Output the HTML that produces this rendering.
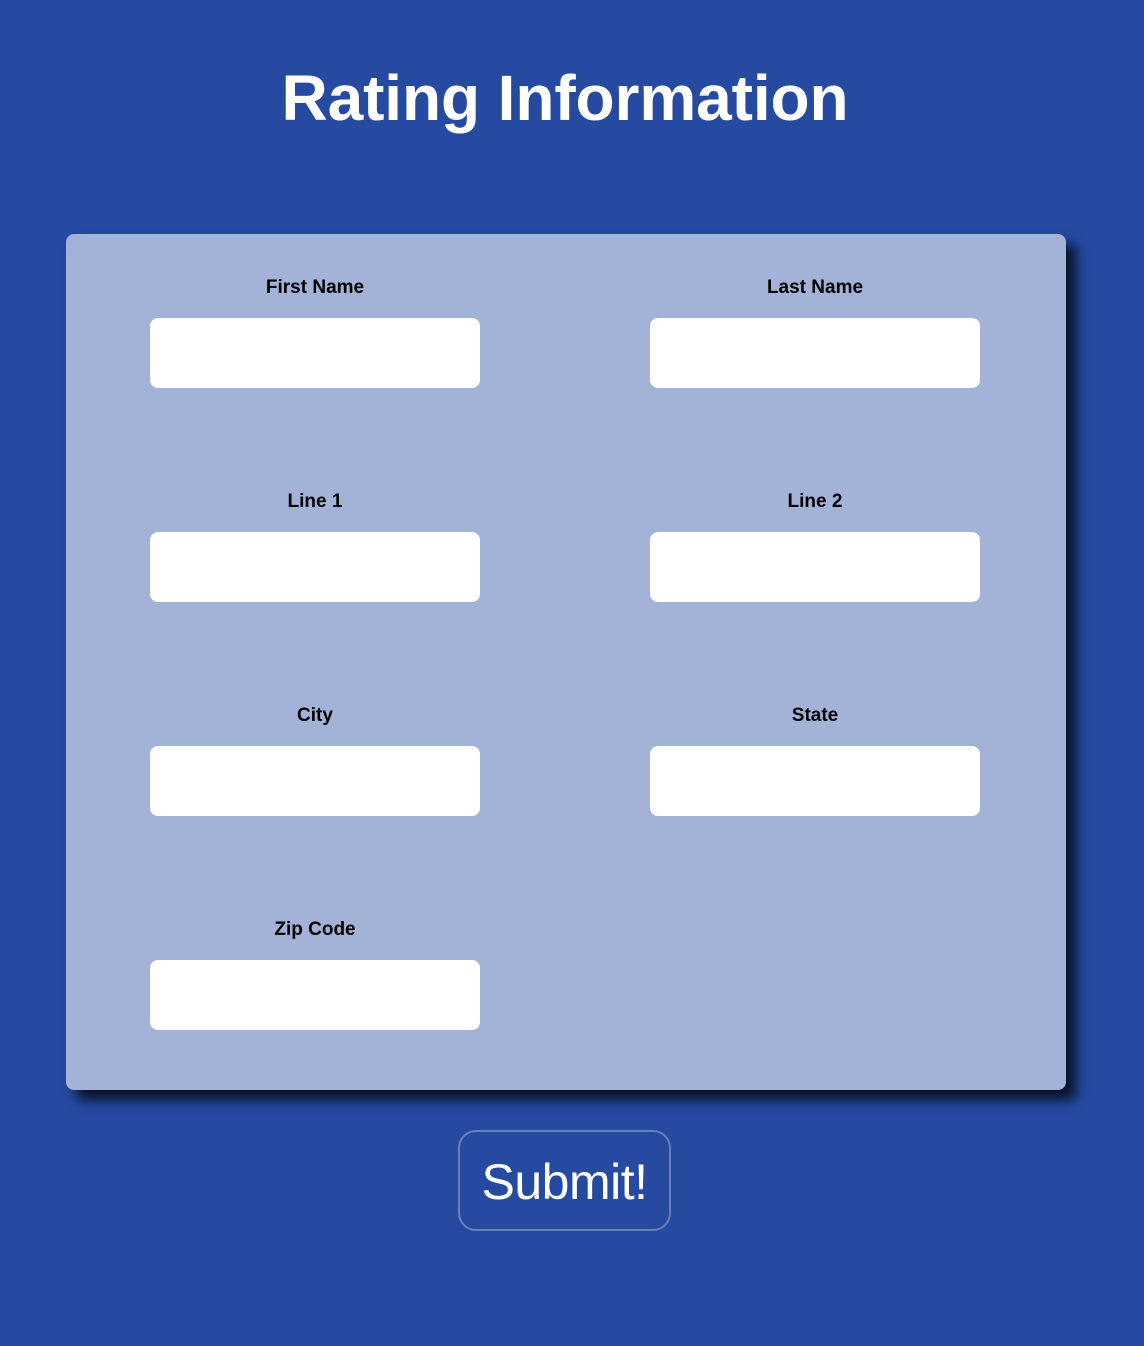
<!DOCTYPE html>
<html><head><style>
body{margin:0;width:1144px;height:1346px;background:#254aa0;font-family:"Liberation Sans",Arial,sans-serif;position:relative;overflow:hidden}
h1{position:absolute;top:60px;left:0;width:1130px;text-align:center;margin:0;color:#fff;font-size:64px;font-weight:bold;line-height:76px;letter-spacing:-0.1px}
.card{position:absolute;left:66px;top:234px;width:1000px;height:856px;background:#a3b2d7;border-radius:8px;box-shadow:10px 10px 12px rgba(0,0,0,0.75)}
.f{position:absolute;width:330px}
.f label{position:absolute;top:43px;left:0;width:330px;text-align:center;font-weight:bold;font-size:19px;line-height:22px;color:#000}
.f div{position:absolute;top:84px;left:0;width:330px;height:70px;background:#fff;border-radius:8px}
.btn{position:absolute;left:458px;top:1130px;width:209px;height:97px;border:2px solid rgba(255,255,255,0.3);border-radius:18px;color:#fff;font-size:50px;letter-spacing:-0.5px;text-align:center;line-height:100px}
</style></head><body>
<h1>Rating Information</h1>
<div class="card">
<div class="f" style="left:84px;top:0"><label>First Name</label><div></div></div>
<div class="f" style="left:584px;top:0"><label>Last Name</label><div></div></div>
<div class="f" style="left:84px;top:214px"><label>Line 1</label><div></div></div>
<div class="f" style="left:584px;top:214px"><label>Line 2</label><div></div></div>
<div class="f" style="left:84px;top:428px"><label>City</label><div></div></div>
<div class="f" style="left:584px;top:428px"><label>State</label><div></div></div>
<div class="f" style="left:84px;top:642px"><label>Zip Code</label><div></div></div>
</div>
<div class="btn">Submit!</div>
</body></html>
